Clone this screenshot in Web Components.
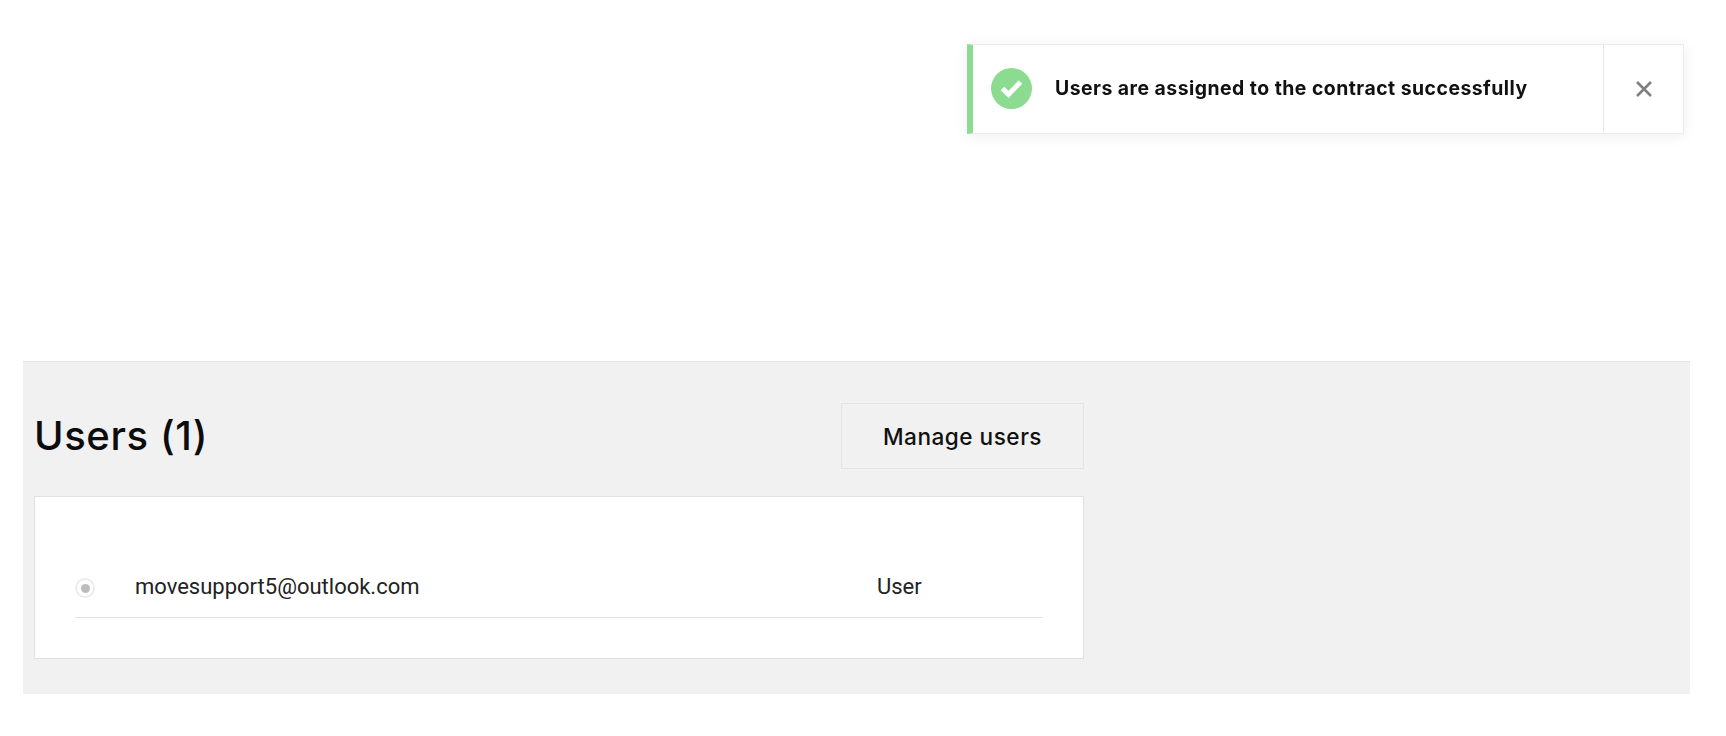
<!DOCTYPE html>
<html>
<head>
<meta charset="utf-8">
<title>Users</title>
<style>
  html, body { margin: 0; background: #fff; }
  body { padding: 361px 36px 42px 23px; font-family: Inter, "Liberation Sans", sans-serif; color: #111; }
</style>
</head>
<body>
<toast-message>Users are assigned to the contract successfully</toast-message>
<users-panel count="1">
  <user-row email="movesupport5@outlook.com" role="User"></user-row>
</users-panel>
<script>
class ToastMessage extends HTMLElement {
    constructor() {
        super();
        this.attachShadow({ mode: 'open' });
        this.shadowRoot.innerHTML = `
      <style>
        :host {
            position: fixed;
            top: 44px;
            left: 967px;
            width: 717px;
            height: 90px;
            box-sizing: border-box;
            display: flex;
            align-items: stretch;
            padding-bottom: 2px;
            background: #fff;
            border: 1px solid #ebebeb;
            border-left: 6px solid #8bdc91;
            box-shadow: 0 2px 14px rgba(0, 0, 0, 0.07);
        }
        .icon {
            width: 41px;
            height: 41px;
            margin: auto 0 auto 18px;
            flex: none;
        }
        .text {
            flex: 1;
            align-self: center;
            margin-left: 23px;
            font: 700 19.4px Inter, "Liberation Sans", sans-serif;
            letter-spacing: 0.48px;
            color: #111;
        }
        .close {
            width: 79px;
            flex: none;
            display: flex;
            align-items: center;
            justify-content: center;
            margin-bottom: -2px;
            border-left: 1px solid #e8e8e8;
        }
      </style>
      <svg class="icon" viewBox="0 0 41 41">
        <circle cx="20.5" cy="20.5" r="20.5" fill="#8bdc91"/>
        <path d="M11.5 20.5l6 6 12-12.5" fill="none" stroke="#fff" stroke-width="5"/>
      </svg>
      <span class="text"><slot></slot></span>
      <div class="close">
        <svg width="18" height="18" viewBox="0 0 18 18">
          <path d="M2 2l14 14M16 2L2 16" fill="none" stroke="#808080" stroke-width="2.6"/>
        </svg>
      </div>
    `;
    }
}

class UsersPanel extends HTMLElement {
    constructor() {
        super();
        this.attachShadow({ mode: 'open' });
        this.shadowRoot.innerHTML = `
      <style>
        :host {
            display: block;
            height: 333px;
            box-sizing: border-box;
            padding: 41px 0 0 11px;
            background: #f1f1f1;
            border-top: 1px solid #e3e3e3;
        }
        .column {
            width: 1050px;
        }
        .head {
            display: flex;
            justify-content: space-between;
            align-items: center;
            height: 66px;
        }
        h2 {
            margin: -2px 0 0;
            font: 500 40px Inter, "Liberation Sans", sans-serif;
            letter-spacing: 0.6px;
            color: #0c0c0c;
        }
        .manage {
            box-sizing: border-box;
            width: 243px;
            height: 66px;
            display: flex;
            align-items: center;
            justify-content: center;
            border: 1px solid #e4e4e4;
            font: 500 22.6px Inter, "Liberation Sans", sans-serif;
            letter-spacing: 0.5px;
            color: #111;
        }
        .card {
            box-sizing: border-box;
            height: 163px;
            margin-top: 27px;
            padding: 63px 41px 0 40px;
            background: #fff;
            border: 1px solid #e0e0e0;
        }
      </style>
      <div class="column">
        <div class="head">
          <h2>Users (${this.getAttribute('count')})</h2>
          <div class="manage">Manage users</div>
        </div>
        <div class="card"><slot></slot></div>
      </div>
    `;
    }
}

class UserRow extends HTMLElement {
    constructor() {
        super();
        this.attachShadow({ mode: 'open' });
        this.shadowRoot.innerHTML = `
      <style>
        :host {
            display: flex;
            align-items: center;
            height: 58px;
            padding-bottom: 4px;
            box-sizing: border-box;
            border-bottom: 1px solid #e2e2e2;
            font: 400 22px Roboto, "Liberation Sans", sans-serif;
            color: #222;
        }
        .radio {
            box-sizing: border-box;
            width: 20px;
            height: 20px;
            flex: none;
            margin-top: 3px;
            border: 2px solid #ececec;
            border-radius: 50%;
            display: flex;
            align-items: center;
            justify-content: center;
        }
        .radio::after {
            content: '';
            width: 9px;
            height: 9px;
            border-radius: 50%;
            background: #bdbdbd;
        }
        .email {
            margin-left: 40px;
            width: 742px;
            flex: none;
        }
      </style>
      <span class="radio"></span>
      <span class="email">${this.getAttribute('email')}</span>
      <span class="role">${this.getAttribute('role')}</span>
    `;
    }
}

customElements.define('toast-message', ToastMessage);
customElements.define('users-panel', UsersPanel);
customElements.define('user-row', UserRow);
</script>
</body>
</html>
